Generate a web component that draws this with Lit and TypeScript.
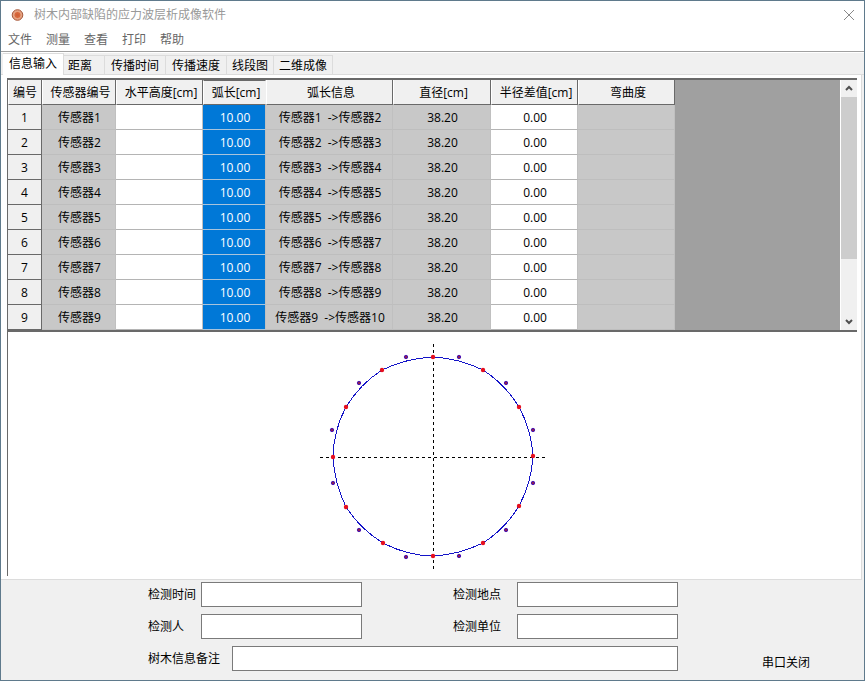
import { LitElement, html, css, svg } from "lit";
import { customElement, state } from "lit/decorators.js";
import { classMap } from "lit/directives/class-map.js";

type Point = [number, number];

// Sensor positions and the arc control points between them, relative to the trunk centre.
const SENSORS: Point[] = [
  [0, -100], [50, -87], [86, -50], [100, -1], [86, 49], [50, 86],
  [0, 99], [-50, 86], [-87, 50], [-100, 0], [-87, -50], [-51, -87],
];
const CONTROLS: Point[] = [
  [26, -100], [73, -74], [100, -27], [100, 26], [73, 73], [26, 99],
  [-27, 100], [-74, 73], [-100, 26], [-101, -27], [-74, -74], [-27, -100],
];

// The bark line bends towards each control point by this share of its distance from the chord.
const TENSION = 0.8;

function arcTo(control: Point, from: Point, to: Point): string {
  const bend = control.map((c, k) => {
    const middle = (from[k] + to[k]) / 2;
    return middle + (c - middle) * TENSION;
  });
  return `Q${bend} ${to}`;
}

@customElement("trunk-section")
export class TrunkSection extends LitElement {
  static styles = css`
    :host { display: block; line-height: 0; }
    .axis { stroke: #000; stroke-dasharray: 3 3; fill: none; }
    .outline { stroke: #1414c8; fill: none; }
    .sensor { fill: #e60f1e; }
    .control { fill: #8c1e50; stroke: #4a14b4; }
  `;

  render() {
    const outline =
      `M${SENSORS[0]}` +
      CONTROLS.map((c, i) => arcTo(c, SENSORS[i], SENSORS[(i + 1) % SENSORS.length])).join("");
    return html`
      <svg width="226" height="226" viewBox="-113 -113 226 226" role="img" aria-label="树木断面">
        <g shape-rendering="crispEdges">
          <path class="axis" d="M-113 .5H113M.5 -113V113" />
          <path class="outline" d=${outline} />
        </g>
        ${CONTROLS.map(([x, y]) => svg`<circle class="control" cx=${x} cy=${y} r="1.7" />`)}
        ${SENSORS.map(([x, y]) => svg`<circle class="sensor" cx=${x} cy=${y} r="2.2" />`)}
      </svg>
    `;
  }
}

@customElement("app-root")
export class AppRoot extends LitElement {
  static styles = css`
    :host {
      display: flex;
      flex-direction: column;
      box-sizing: border-box;
      min-height: 100vh;
      border: 1px solid #5f7a8c;
      background: #f0f0f0;
      color: #000;
      font: 12px/16px "Open Sans", "Noto Sans CJK SC", sans-serif;
    }
    * { box-sizing: border-box; }
    button {
      margin: 0;
      padding: 0;
      border: 0;
      background: none;
      color: inherit;
      font: inherit;
      white-space: nowrap;
    }
    .title {
      display: flex;
      align-items: center;
      height: 28px;
      padding: 0 9px;
      background: #fff;
      color: #999;
    }
    .logo { width: 14px; height: 14px; margin-right: 10px; }
    .caption { flex: 1; }
    .close { width: 12px; height: 12px; }
    .close svg, .arrow svg { display: block; }
    .menu {
      display: flex;
      align-items: center;
      gap: 14px;
      height: 23px;
      padding: 0 7px;
      background: #fff;
      border-bottom: 1px solid #a0a0a0;
      color: #666;
    }
    .tabs {
      display: flex;
      align-items: flex-end;
      height: 23px;
      padding-left: 2px;
      border-top: 1px solid #fff;
      border-bottom: 1px solid #dcdcdc;
    }
    .tab {
      height: 19px;
      padding: 2px 6px 0;
      line-height: 16px;
      border: 1px solid #dcdcdc;
      border-width: 1px 1px 0 0;
    }
    .tab.padded { padding-right: 12px; padding-left: 4px; }
    .tab.narrow { padding-left: 5px; padding-right: 5px; }
    .tab.on {
      height: 22px;
      margin-bottom: -1px;
      padding-bottom: 4px;
      background: #fff;
    }
    .page {
      flex: 1;
      display: flex;
      flex-direction: column;
      margin-right: 2px;
      padding: 3px 4px 3px 6px;
      background: #fff;
      border-right: 1px solid #dcdcdc;
      border-bottom: 1px solid #dcdcdc;
    }
    .grid {
      display: flex;
      height: 254px;
      border: solid #696969;
      border-width: 2px 0 2px 1px;
      background: #a0a0a0;
    }
    .cells { flex: 1; overflow: hidden; }
    table {
      table-layout: fixed;
      width: 667px;
      border-collapse: separate;
      border-spacing: 0;
      text-align: center;
    }
    th, td { height: 25px; padding: 0; font-weight: 400; white-space: nowrap; }
    thead th {
      padding-top: 2px;
      padding-left: 3px;
      background: #f0f0f0;
      border-right: 1px solid #696969;
      border-bottom: 1px solid #696969;
      border-left: 1px solid #fff;
    }
    thead th:first-child { padding-left: 0; }
    thead th.active { padding-top: 1px; border-top: 1px solid #696969; border-right-color: #f0f0f0; }
    tbody th {
      padding-top: 2px;
      background: #f0f0f0;
      border-right: 1px solid #696969;
      border-bottom: 1px solid #696969;
    }
    td {
      padding: 2px 0 0 2px;
      background: #c8c8c8;
      border-bottom: 1px solid #bebebe;
      border-right: 1px solid #c0c0c0;
    }
    td.open { background: #fff; border-bottom-color: #b4b4b4; }
    td.picked { background: #0078d7; border-bottom-color: #a8c4dc; color: #fff; }
    .num { width: 34px; }
    .name { width: 74px; }
    .mid { width: 87px; }
    .arc { width: 63px; }
    .info { width: 127px; }
    .dia { width: 98px; }
    .bend { width: 97px; }
    .scroll {
      display: flex;
      flex-direction: column;
      width: 17px;
      background: #f0f0f0;
      border-left: 1px solid #fff;
    }
    .arrow { display: grid; place-items: center; height: 17px; }
    .track { flex: 1; }
    .thumb { height: 162px; background: #cdcdcd; }
    .canvas {
      flex: 1;
      display: flex;
      justify-content: center;
      align-items: center;
      min-height: 240px;
      padding-top: 5px;
      border-left: 1px solid #696969;
    }
    form {
      display: flex;
      align-items: flex-end;
      padding: 2px 54px 9px 147px;
    }
    .fields {
      display: grid;
      grid-template-columns: 214fr 225fr;
      gap: 7px 91px;
      flex: 0 1 530px;
      min-width: 0;
    }
    .field { display: flex; align-items: center; min-width: 0; }
    .field span { flex: none; width: 53px; }
    .field.right span { width: 64px; }
    .field.wide { grid-column: 1 / -1; }
    .field.wide span { width: 84px; }
    input {
      flex: 1;
      width: 0;
      min-width: 0;
      height: 25px;
      padding: 2px 4px;
      border: 1px solid #7a7a7a;
      border-radius: 0;
      background: #fff;
      font: inherit;
    }
    output { margin-left: auto; white-space: nowrap; }
  `;

  @state() private tab = 0;

  private tabs = ["信息输入", "距离", "传播时间", "传播速度", "线段图", "二维成像"];
  private menus = ["文件", "测量", "查看", "打印", "帮助"];
  private rows = [1, 2, 3, 4, 5, 6, 7, 8, 9];

  private arrow(d: string, label: string) {
    return html`<button class="arrow" aria-label=${label}>
      <svg width="8" height="7" viewBox="0 0 8 7" fill="none" stroke="#505050" stroke-width="2"><path d=${d} /></svg>
    </button>`;
  }

  render() {
    return html`
      <header class="title">
        <svg class="logo" viewBox="0 0 14 14">
          <circle cx="7.5" cy="7" r="5.3" fill="#e0a080" stroke="#a8583a" />
          <circle cx="7.5" cy="7" r="3.6" fill="#d9683c" stroke="#eab293" stroke-width=".8" />
          <circle cx="7.5" cy="7" r="1.6" fill="#cf6238" />
        </svg>
        <span class="caption">树木内部缺陷的应力波层析成像软件</span>
        <button class="close" aria-label="关闭">
          <svg width="12" height="12" viewBox="0 0 12 12" stroke="#888"><path d="M1 1L11 11M11 1L1 11" /></svg>
        </button>
      </header>
      <nav class="menu">${this.menus.map((m) => html`<button>${m}</button>`)}</nav>
      <div class="tabs" role="tablist">
        ${this.tabs.map(
          (t, i) => html`<button
            role="tab"
            aria-selected=${i === this.tab}
            class=${classMap({ tab: true, on: i === this.tab, padded: i === 1, narrow: i > 3 })}
            @click=${() => (this.tab = i)}
          >${t}</button>`
        )}
      </div>
      <main class="page">
        <div class="grid">
          <div class="cells">
            <table>
              <thead>
                <tr>
                  <th class="num">编号</th>
                  <th class="name">传感器编号</th>
                  <th class="mid">水平高度[cm]</th>
                  <th class="arc active">弧长[cm]</th>
                  <th class="info">弧长信息</th>
                  <th class="dia">直径[cm]</th>
                  <th class="mid">半径差值[cm]</th>
                  <th class="bend">弯曲度</th>
                </tr>
              </thead>
              <tbody>
                ${this.rows.map(
                  (n) => html`<tr>
                    <th scope="row">${n}</th>
                    <td>传感器${n}</td>
                    <td class="open"></td>
                    <td class="picked">10.00</td>
                    <td>传感器${n}&nbsp; -&gt;传感器${n + 1}</td>
                    <td>38.20</td>
                    <td class="open">0.00</td>
                    <td></td>
                  </tr>`
                )}
              </tbody>
            </table>
          </div>
          <div class="scroll">
            ${this.arrow("M1 5L4 2L7 5", "向上滚动")}
            <div class="track"><div class="thumb"></div></div>
            ${this.arrow("M1 2L4 5L7 2", "向下滚动")}
          </div>
        </div>
        <div class="canvas"><trunk-section></trunk-section></div>
      </main>
      <form>
        <div class="fields">
          <label class="field"><span>检测时间</span><input type="text" /></label>
          <label class="field right"><span>检测地点</span><input type="text" /></label>
          <label class="field"><span>检测人</span><input type="text" /></label>
          <label class="field right"><span>检测单位</span><input type="text" /></label>
          <label class="field wide"><span>树木信息备注</span><input type="text" /></label>
        </div>
        <output>串口关闭</output>
      </form>
    `;
  }
}
